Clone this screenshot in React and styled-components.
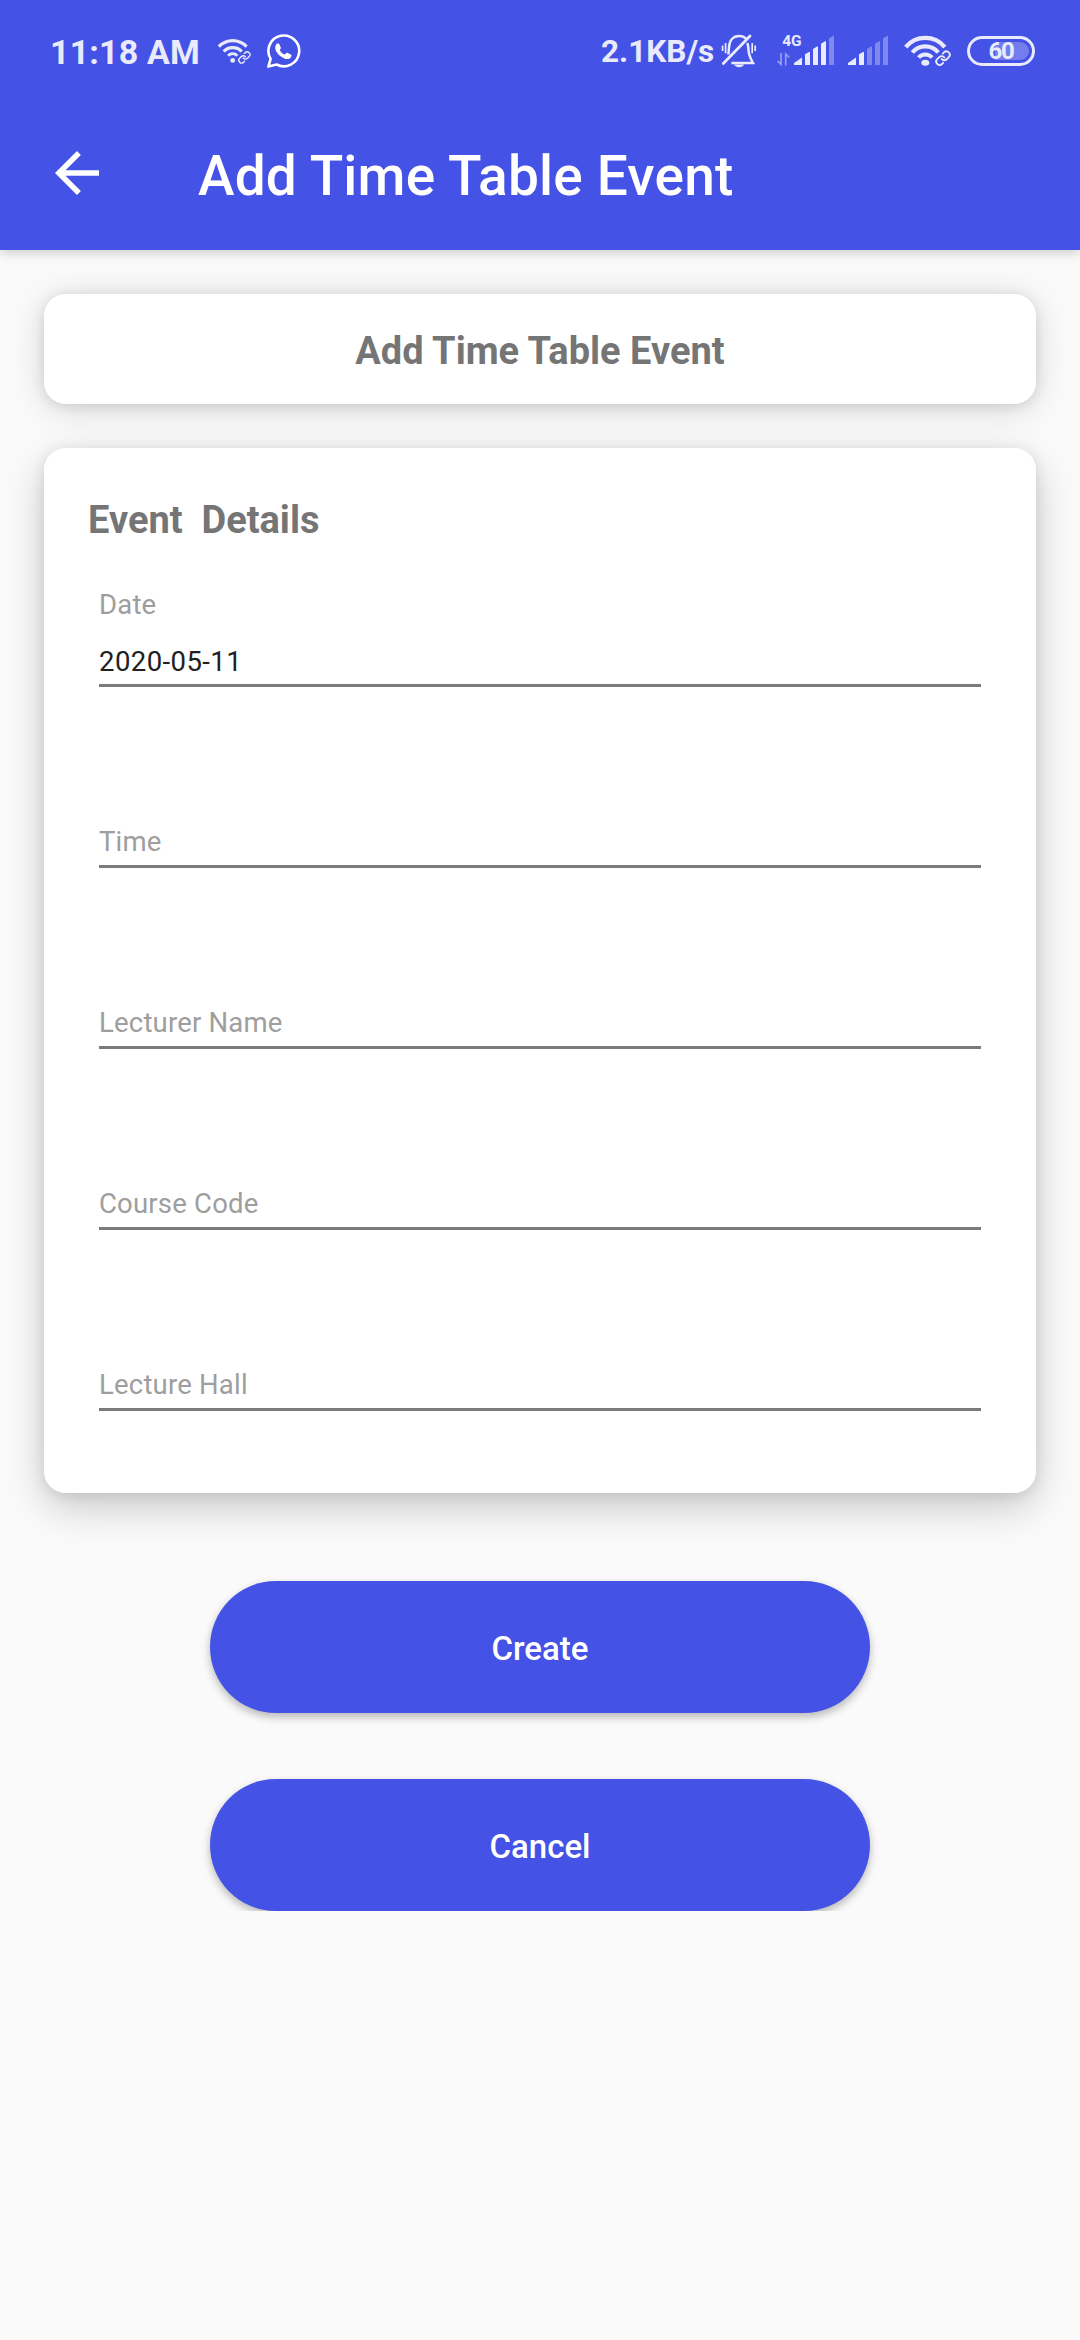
import React from "react";
import styled, { createGlobalStyle } from "styled-components";

const PRIMARY = "#4552e6";
const STATUS = "#e9ebfd";

const GlobalStyle = createGlobalStyle`
  * { box-sizing: border-box; }
  body {
    margin: 0;
    background: #fafafa;
    font-family: Roboto, "Liberation Sans", sans-serif;
  }
`;

const Screen = styled.div`
  width: 1080px;
  height: 2340px;
  background: #fafafa;
  overflow: hidden;
`;

const Header = styled.header`
  position: relative;
  z-index: 2;
  height: 250px;
  background: ${PRIMARY};
  box-shadow: 0 3px 11px rgba(0, 0, 0, 0.18);
`;

const StatusBar = styled.div`
  display: flex;
  align-items: center;
  justify-content: space-between;
  height: 96px;
  padding: 8px 45px 0 50px;
  color: ${STATUS};
`;

const StatusGroup = styled.div`
  display: flex;
  align-items: center;
`;

const Clock = styled.span`
  width: 166px;
  font-size: 34px;
  font-weight: 700;
  line-height: 40px;
  letter-spacing: 0.15px;
  white-space: nowrap;
`;

const NetSpeed = styled.span`
  width: 119px;
  font-size: 31.5px;
  font-weight: 700;
  line-height: 40px;
  white-space: nowrap;
`;

const StatusIcon = styled.svg`
  display: block;
  flex: none;
  height: 40px;
  margin-left: ${(p) => p.$gap || 0}px;
`;

const Battery = styled.div`
  position: relative;
  display: flex;
  align-items: center;
  justify-content: center;
  width: 68px;
  height: 30px;
  margin: 0 0 2px 15px;
  border: 3px solid ${STATUS};
  border-radius: 15px;
`;

const BatteryLevel = styled.span`
  position: absolute;
  top: 3px;
  right: 3px;
  bottom: 3px;
  width: 34px;
  border-radius: 0 9px 9px 0;
  background: rgba(255, 255, 255, 0.25);
`;

const BatteryText = styled.span`
  position: relative;
  font-size: 24px;
  font-weight: 700;
  line-height: 24px;
  letter-spacing: -1.2px;
`;

const Toolbar = styled.div`
  display: flex;
  align-items: center;
  height: 154px;
  padding-left: 44px;
`;

const BackIcon = styled.svg`
  display: block;
  width: 66px;
  height: 66px;
`;

const ToolbarTitle = styled.h1`
  margin: 0 0 0 88px;
  padding-top: 6px;
  color: #fff;
  font-size: 55px;
  font-weight: 500;
  line-height: 64px;
  letter-spacing: 0.2px;
`;

const Main = styled.main`
  position: relative;
  z-index: 1;
  display: flex;
  flex-direction: column;
  padding: 44px 44px 0;
  overflow: hidden;
`;

const Card = styled.section`
  position: relative;
  border-radius: 22px;
  background: #fff;

  &::before {
    content: "";
    position: absolute;
    inset: 0;
    z-index: -1;
    border-radius: inherit;
    box-shadow: ${(p) => p.$shadow};
  }
`;

const HeadingCard = styled(Card)`
  display: flex;
  align-items: center;
  justify-content: center;
  height: 110px;
  padding-top: 4px;
`;

const FormCard = styled(Card)`
  margin-top: 44px;
  padding: 49px 44px 82px;
`;

const Heading = styled.h2`
  margin: 0;
  color: #757575;
  font-size: 38px;
  font-weight: 700;
  line-height: 46px;
  white-space: pre;
`;

const Fields = styled.div`
  display: flex;
  flex-direction: column;
  gap: 139px;
  padding: 46px 11px 0;
`;

const Field = styled.div`
  display: flex;
  flex-direction: column;
  gap: 25px;
  padding-bottom: ${(p) => (p.$filled ? 6 : 7)}px;
  border-bottom: 3px solid #7b7b7b;
  font-size: 27.5px;
  line-height: 32px;
`;

const Hint = styled.span`
  color: #9e9e9e;
  letter-spacing: 0.2px;
`;

const Value = styled.span`
  color: #212121;
  letter-spacing: 0.42px;
`;

const Actions = styled.div`
  display: flex;
  flex-direction: column;
  align-items: center;
  gap: 66px;
  margin-top: 88px;
`;

const Button = styled.button`
  width: 660px;
  height: 132px;
  padding: 4px 0 0;
  border: 0;
  border-radius: 66px;
  background: ${PRIMARY};
  box-shadow: 0 4px 8px rgba(0, 0, 0, 0.27);
  color: #fff;
  font-family: inherit;
  font-size: 33px;
  font-weight: 500;
  line-height: 40px;
`;

/* Two interlocking chain links, centred on the given point. */
function Link({ x, y, s, w }) {
  return (
    <g
      transform={`translate(${x} ${y}) scale(${s}) translate(-12 -12)`}
      fill="none"
      stroke={STATUS}
      strokeWidth={w}
      strokeLinecap="round"
    >
      <path d="M10 13a5 5 0 0 0 7.54.54l3-3a5 5 0 0 0-7.07-7.07l-1.72 1.71" />
      <path d="M14 11a5 5 0 0 0-7.54-.54l-3 3a5 5 0 0 0 7.07 7.07l1.71-1.71" />
    </g>
  );
}

function Arc({ cx, cy, r, w, a = 0.73 }) {
  return (
    <path
      d={`M${cx - r * a} ${cy - r * Math.sqrt(1 - a * a)}A${r} ${r} 0 0 1 ${cx + r * a} ${cy - r * Math.sqrt(1 - a * a)}`}
      fill="none"
      stroke={STATUS}
      strokeWidth={w}
    />
  );
}

function SmallWifi() {
  return (
    <StatusIcon width="36" viewBox="0 0 36 40">
      <Arc cx={16.7} cy={27.6} r={19} w={3.1} />
      <Arc cx={16.7} cy={28} r={12.4} w={3.1} />
      <Arc cx={16.7} cy={28} r={6.3} w={2.8} />
      <circle cx="16.7" cy="28.4" r="2.4" fill={STATUS} />
      <Link x={28.4} y={25.4} s={0.56} w={2.5} />
    </StatusIcon>
  );
}

function WhatsApp() {
  return (
    <StatusIcon width="36" viewBox="0 0 36 40" $gap={14}>
      <path
        d="M4.6 26.8A15.4 15.4 0 1 1 10.6 32.5L2.4 34.6Z"
        fill="none"
        stroke="#fff"
        strokeWidth="2.6"
        strokeLinejoin="round"
      />
      <path
        d="M10.5 12c.6-.8 2.2-.9 2.7 0l1.6 3.4c.3.7 0 1.2-1.2 2.5c1.3 2.4 2.9 3.8 5.4 4.6c1-1.3 1.6-2 2.3-1.7l3.8 1.9c.6.4.5 1.7-.3 2.7c-1.4 1.6-3.9 2-6.4 1c-4.4-1.8-7.3-4.6-8.6-7.9c-.9-2.6-.6-4.8.7-6.5z"
        fill="#fff"
      />
    </StatusIcon>
  );
}

function BellOff() {
  return (
    <StatusIcon width="38" viewBox="0 0 38 40">
      <g fill="none" stroke={STATUS} strokeWidth="2.5">
        <path d="M8.4 22.5L9 15.5C9.4 8.3 13.2 4 19 4C22 4 24.4 4.900 26 6.600" />
        <path d="M27.3 11C28.2 13 28.4 15 28.5 18C28.7 22.6 29.8 25.4 33 31H11.4" />
        <path d="M30 4L3.3 31.4" strokeWidth="2.8" strokeLinecap="round" />
        <path d="M2.6 13.4V19M5.6 11V21.2M32.2 11V21.2M35.2 13.4V19" strokeWidth="1.7" />
      </g>
      <path d="M14 32.6H24.2C23 34.5 21.4 35.2 19.1 35.2S15.2 34.5 14 32.6Z" fill={STATUS} />
    </StatusIcon>
  );
}

const BARS = [
  "M0 33V31L8 25.5V33Z",
  "M11 33V22.3L15 20H16V33Z",
  "M19 33V17L23 14.6H24V33Z",
  "M27 33V11.7L31 9.3H32V33Z",
  "M35 33V6.4L39 4H40V33Z",
];

function Bars({ x, strong }) {
  return (
    <g transform={`translate(${x} 0)`} fill={STATUS}>
      {BARS.map((d, i) => (
        <path key={d} d={d} opacity={i < strong ? 1 : 0.36} />
      ))}
    </g>
  );
}

function MobileData() {
  return (
    <StatusIcon width="58" viewBox="0 0 58 40" $gap={18}>
      <text x="6.2" y="14" fill={STATUS} fontSize="15.5" fontWeight="700">
        4G
      </text>
      <path
        d="M5 21V32.5L1.5 29M9.7 33.5V22L13.2 25.5"
        fill="none"
        stroke={STATUS}
        strokeWidth="1.7"
        opacity="0.5"
      />
      <Bars x={18} strong={4} />
    </StatusIcon>
  );
}

function SecondSim() {
  return (
    <StatusIcon width="40" viewBox="0 0 40 40" $gap={14}>
      <Bars x={0} strong={2} />
    </StatusIcon>
  );
}

function Wifi() {
  return (
    <StatusIcon width="49" viewBox="0 0 49 40" $gap={15}>
      <Arc cx={22.3} cy={31.2} r={25.3} w={4.4} a={0.77} />
      <Arc cx={22.3} cy={31.2} r={16.8} w={4.2} a={0.77} />
      <Arc cx={22.3} cy={31.2} r={8.8} w={4} a={0.77} />
      <ellipse cx="22.3" cy="30.7" rx="4" ry="3" fill={STATUS} />
      <Link x={40} y={26.2} s={0.68} w={2.7} />
    </StatusIcon>
  );
}

const FIELDS = [
  { label: "Date", value: "2020-05-11" },
  { label: "Time" },
  { label: "Lecturer Name" },
  { label: "Course Code" },
  { label: "Lecture Hall" },
];

const HEADING_SHADOW = "0 2px 14px rgba(0,0,0,.11), 0 5px 36px rgba(0,0,0,.14)";
const FORM_SHADOW = "0 2px 14px rgba(0,0,0,.09), 0 14px 40px rgba(0,0,0,.2)";

export default function App() {
  return (
    <Screen>
      <GlobalStyle />
      <Header>
        <StatusBar>
          <StatusGroup>
            <Clock>11:18 AM</Clock>
            <SmallWifi />
            <WhatsApp />
          </StatusGroup>
          <StatusGroup>
            <NetSpeed>2.1KB/s</NetSpeed>
            <BellOff />
            <MobileData />
            <SecondSim />
            <Wifi />
            <Battery>
              <BatteryLevel />
              <BatteryText>60</BatteryText>
            </Battery>
          </StatusGroup>
        </StatusBar>
        <Toolbar>
          <BackIcon viewBox="0 0 24 24" fill="#fff">
            <path d="M20 11H7.83l5.59-5.59L12 4l-8 8 8 8 1.41-1.41L7.83 13H20v-2z" />
          </BackIcon>
          <ToolbarTitle>Add Time Table Event</ToolbarTitle>
        </Toolbar>
      </Header>
      <Main>
        <HeadingCard $shadow={HEADING_SHADOW}>
          <Heading>Add Time Table Event</Heading>
        </HeadingCard>
        <FormCard $shadow={FORM_SHADOW}>
          <Heading>{"Event  Details"}</Heading>
          <Fields>
            {FIELDS.map(({ label, value }) => (
              <Field key={label} $filled={Boolean(value)}>
                <Hint>{label}</Hint>
                {value && <Value>{value}</Value>}
              </Field>
            ))}
          </Fields>
        </FormCard>
        <Actions>
          <Button>Create</Button>
          <Button>Cancel</Button>
        </Actions>
      </Main>
    </Screen>
  );
}
